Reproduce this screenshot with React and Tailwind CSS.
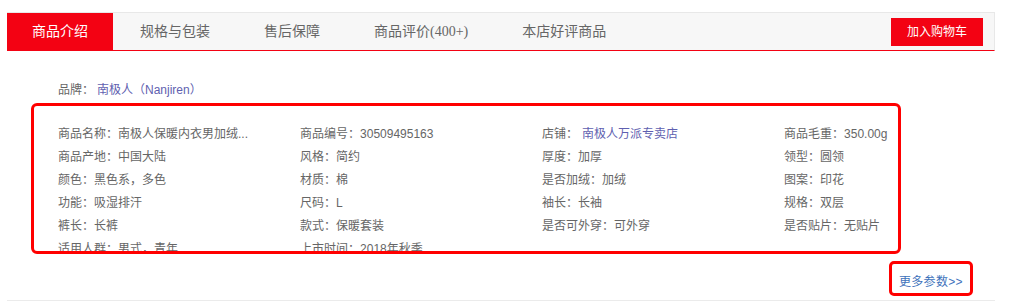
const tabs = ["商品介绍", "规格与包装", "售后保障", "商品评价(400+)", "本店好评商品"];

const rows = [
    [["商品名称", "南极人保暖内衣男加绒..."], ["商品编号", "30509495163"], ["店铺", "南极人万派专卖店", true], ["商品毛重", "350.00g"]],
    [["商品产地", "中国大陆"], ["风格", "简约"], ["厚度", "加厚"], ["领型", "圆领"]],
    [["颜色", "黑色系，多色"], ["材质", "棉"], ["是否加绒", "加绒"], ["图案", "印花"]],
    [["功能", "吸湿排汗"], ["尺码", "L"], ["袖长", "长袖"], ["规格", "双层"]],
    [["裤长", "长裤"], ["款式", "保暖套装"], ["是否可外穿", "可外穿"], ["是否贴片", "无贴片"]],
    [["适用人群", "男式，青年"], ["上市时间", "2018年秋季"]],
];

export default function App() {
    return (
        <div className="w-[1019px] h-[305px] bg-white overflow-hidden pt-[12px] font-['Liberation_Sans','Noto_Sans_CJK_SC',sans-serif]">
            <div className="ml-[7px] w-[988px]">
                {/* Tab bar */}
                <div className="h-[39px] bg-[#f7f7f7] border-t border-r border-[#e8e8e8] border-b border-b-[#f30213] flex items-stretch">
                    {tabs.map((t, i) => (
                        <div
                            key={t}
                            className={
                                i === 0
                                    ? "w-[106px] bg-[#f30213] text-white text-[14px] flex items-center justify-center"
                                    : "px-[27px] text-[#666] text-[14px] flex items-center justify-center font-['Liberation_Serif','Noto_Sans_CJK_SC',serif]"
                            }
                        >
                            {t}
                        </div>
                    ))}
                    <div className="flex-1" />
                    <div className="self-center mr-[11px] w-[92px] h-[28px] bg-[#f30213] text-white text-[12px] flex items-center justify-center">
                        加入购物车
                    </div>
                </div>

                {/* Brand */}
                <div className="mt-[30px] ml-[51px] text-[12px] leading-[18px] text-[#666]">
                    品牌：<span className="ml-[3px] text-[#5f5fb0]">南极人（Nanjiren）</span>
                </div>

                {/* Params */}
                <div className="mt-[4px] ml-[24px] w-[870px] h-[151px] border-[3px] border-[#ff0000] rounded-[6px] overflow-hidden pt-[17px] pl-[24px]">
                    {rows.map((row, r) => (
                        <div key={r} className="grid grid-cols-[242px_242px_242px_1fr] text-[12px] leading-[23px] text-[#666]">
                            {row.map(([k, v, link]) => (
                                <div key={k} className="whitespace-nowrap">
                                    {k}：
                                    {link ? <span className="ml-[4px] text-[#5f5fb0]">{v}</span> : v}
                                </div>
                            ))}
                        </div>
                    ))}
                </div>

                {/* More */}
                <div className="flex justify-end mt-[7px] mr-[22px]">
                    <div className="w-[84px] h-[35px] border-[3px] border-[#ff0000] rounded-[5px] flex items-center pl-[7px] pt-[6px] text-[12px] text-[#3e72bb] tracking-[0.3px]">
                        更多参数&gt;&gt;
                    </div>
                </div>
                <div className="mt-[4px] border-b border-[#ebebeb]" />
            </div>
        </div>
    );
}
